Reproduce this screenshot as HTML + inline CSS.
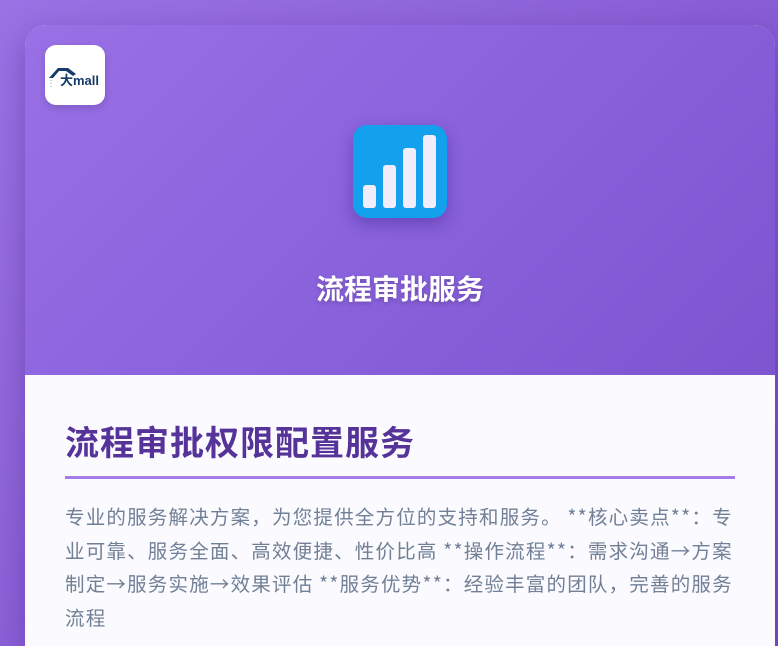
<!DOCTYPE html>
<html><head><meta charset="utf-8"><style>
html,body{margin:0;padding:0;width:778px;height:646px;overflow:hidden}
body{background:linear-gradient(135deg,#9a72e4 0%,#8a5fd6 50%,#7a4fc4 100%);font-family:"Liberation Sans","Noto Sans CJK SC",sans-serif;position:relative}
.card{position:absolute;left:25px;top:25px;width:750px;height:621px;border-radius:22px 22px 0 0;overflow:hidden;background:#fbfaff;box-shadow:0 10px 30px rgba(60,20,120,.35)}
.head{position:absolute;left:0;top:0;width:100%;height:350px;background:linear-gradient(135deg,#9a70e6 0%,#8a62dc 50%,#7e55d0 100%)}
.logo{position:absolute;left:20px;top:20px;width:60px;height:60px;background:#fff;border-radius:11px;box-shadow:0 3px 8px rgba(0,0,0,.15)}
.icon{position:absolute;left:328px;top:100px;width:94px;height:93px;background:#13a0ec;border-radius:14px;box-shadow:0 6px 16px rgba(40,20,120,.35)}
.bar{position:absolute;background:#f1edfb;border-radius:3px;width:13px;bottom:10px}
.htitle{position:absolute;left:0;width:100%;top:243px;text-align:center;color:#fff;font-size:28px;font-weight:bold;text-shadow:0 2px 4px rgba(0,0,0,.2)}
.title{position:absolute;left:40px;top:391px;font-size:34px;font-weight:bold;color:#553399;margin:0;letter-spacing:1px}
.line{position:absolute;left:40px;top:451px;width:670px;height:3px;background:#a47de8}
.p{position:absolute;left:40px;top:474px;width:710px;font-size:19.5px;letter-spacing:1.2px;line-height:33.5px;color:#718096;font-family:"Noto Sans CJK SC",sans-serif;white-space:nowrap}
</style></head><body>
<div class="card">
 <div class="head">
  <div class="logo"><svg width="60" height="60" viewBox="0 0 60 60">
   <path d="M4 33 L13 23 L23 23 L31 29 L28 31 L21 26 L14 26 L8 33Z" fill="#163a6b"/>
   <path d="M6 35 v8" stroke="#8aa" stroke-width="1" stroke-dasharray="1 2"/>
   <text x="15" y="40" font-family="Liberation Sans,Noto Sans CJK SC,sans-serif" font-weight="bold" font-size="13" fill="#163a6b">大mall</text>
  </svg></div>
  <div class="icon">
   <div class="bar" style="left:10px;height:23px"></div>
   <div class="bar" style="left:30px;height:43px"></div>
   <div class="bar" style="left:50px;height:60px"></div>
   <div class="bar" style="left:70px;height:73px"></div>
  </div>
  <div class="htitle">流程审批服务</div>
 </div>
 <h1 class="title">流程审批权限配置服务</h1>
 <div class="line"></div>
 <div class="p">专业的服务解决方案，为您提供全方位的支持和服务。 **核心卖点**：专<br>业可靠、服务全面、高效便捷、性价比高 **操作流程**：需求沟通→方案<br>制定→服务实施→效果评估 **服务优势**：经验丰富的团队，完善的服务<br>流程</div>
</div>
</body></html>
